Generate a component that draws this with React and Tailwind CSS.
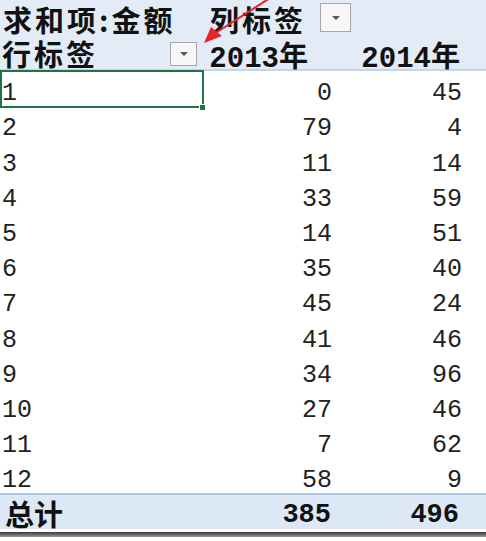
import React from 'react';

const rows = [
  [1, 0, 45],
  [2, 79, 4],
  [3, 11, 14],
  [4, 33, 59],
  [5, 14, 51],
  [6, 35, 40],
  [7, 45, 24],
  [8, 41, 46],
  [9, 34, 96],
  [10, 27, 46],
  [11, 7, 62],
  [12, 58, 9],
];

const cjk = "font-['SimSun','Noto_Sans_CJK_SC',sans-serif]";
const mono = "font-['Liberation_Mono','Noto_Sans_CJK_SC',monospace]";

const DropBtn = ({ className }) => (
  <div className={`absolute flex items-center justify-center border border-[#a6a6a6] bg-[#f7f7f7] ${className}`}>
    <svg width="10" height="6" viewBox="0 0 10 6">
      <path d="M1 1 L9 1 L5 5 Z" fill="#555" />
    </svg>
  </div>
);

export default function App() {
  return (
    <div className="relative w-[486px] h-[541px] bg-white overflow-hidden text-[#111]">
      {/* header */}
      <div className="relative bg-[#e2ebf6] border-b-2 border-[#c3d5ea]">
        <div className="grid grid-cols-[203px_150px_133px] h-[35px]">
          <div className={`${cjk} font-bold text-[29px] tracking-[3px] leading-[29px] pl-[3px] pt-[5px] whitespace-nowrap`}>求和项:金额</div>
          <div className={`${cjk} font-bold text-[29px] tracking-[3px] leading-[29px] pl-[7px] pt-[5px] whitespace-nowrap`}>列标签</div>
          <div />
        </div>
        <div className="grid grid-cols-[203px_150px_133px] h-[34px]">
          <div className={`${cjk} font-bold text-[29px] tracking-[3px] leading-[29px] pl-[2px] pt-[4px] whitespace-nowrap`}>行标签</div>
          <div className={`${mono} font-bold text-[29px] leading-[29px] text-right pr-[45px] pt-[5px] whitespace-nowrap`}>2013<span className={cjk}>年</span></div>
          <div className={`${mono} font-bold text-[29px] leading-[29px] text-right pr-[26px] pt-[5px] whitespace-nowrap`}>2014<span className={cjk}>年</span></div>
        </div>
        <DropBtn className="left-[320px] top-[3px] w-[31px] h-[29px]" />
        <DropBtn className="left-[170px] top-[42px] w-[27px] h-[24px]" />
      </div>

      {/* body */}
      {rows.map(([k, a, b], i) => (
        <div key={k} className={`relative grid grid-cols-[203px_150px_133px] h-[35.2px] ${mono} text-[25px] leading-none text-[#222]`}>
          <div className="flex items-end pl-[2px]">{k}</div>
          <div className="flex items-end justify-end pr-[21px]">{a}</div>
          <div className="flex items-end justify-end pr-[24px]">{b}</div>
          {i === 0 && (
            <>
              <div className="absolute left-0 top-[-1px] w-[204px] h-[38px] border-2 border-[#217346]" />
              <div className="absolute left-[199px] top-[33px] w-[7px] h-[7px] bg-[#217346] border border-white" />
            </>
          )}
        </div>
      ))}

      {/* total */}
      <div className="grid grid-cols-[203px_150px_133px] h-[36px] bg-[#dce8f5] border-t-2 border-[#a9c6e6]">
        <div className={`${cjk} font-bold text-[29px] leading-[30px] pl-[5px] pt-[3px]`}>总计</div>
        <div className={`${mono} font-bold text-[27px] leading-[30px] text-right pr-[22px] pt-[5px]`}>385</div>
        <div className={`${mono} font-bold text-[27px] leading-[30px] text-right pr-[27px] pt-[5px]`}>496</div>
      </div>
      <div className="h-[3px] bg-white" />
      <div className="h-[5px] bg-gradient-to-b from-[#3a3a3a] to-[#9a9a9a]" />

      {/* red arrow */}
      <svg className="absolute left-0 top-0" width="486" height="541" viewBox="0 0 486 541">
        <line x1="270" y1="-2" x2="214" y2="34" stroke="#e8242a" strokeWidth="2" />
        <path d="M204 43 L211 27 L222 36 Z" fill="#e8242a" />
      </svg>
    </div>
  );
}
